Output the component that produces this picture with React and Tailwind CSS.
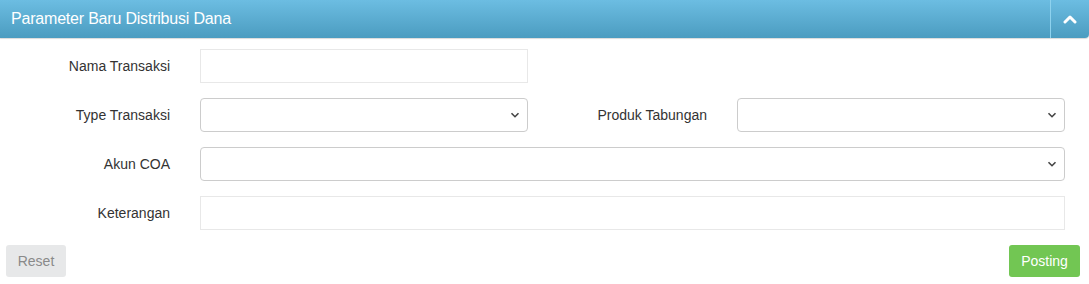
import { useState } from 'react';

function Chevron() {
  return (
    <svg className="pointer-events-none absolute right-[8px] top-1/2 -translate-y-1/2" width="10" height="10" viewBox="0 0 10 10">
      <path d="M1.5 3.2 L5 6.7 L8.5 3.2" fill="none" stroke="#444" strokeWidth="1.6" />
    </svg>
  );
}

function SelectBox({ className = '' }) {
  return (
    <div className={`relative shrink-0 ${className}`}>
      <select className="h-[34px] w-full appearance-none rounded-[4px] border border-[#cccccc] bg-white px-3 text-sm text-[#555] outline-none">
        <option value=""></option>
      </select>
      <Chevron />
    </div>
  );
}

function Label({ children, className = '' }) {
  return <label className={`shrink-0 text-right text-[14px] text-[#333] ${className}`}>{children}</label>;
}

export default function App() {
  const [nama, setNama] = useState('');
  const [ket, setKet] = useState('');

  return (
    <div className="w-[1089px] bg-white" style={{ fontFamily: '"Liberation Sans", Arial, sans-serif' }}>
      <div className="flex h-[38px] items-stretch rounded-br-[4px] bg-gradient-to-b from-[#6cbde2] to-[#4b9cc0] shadow-[0_1px_1px_rgba(0,0,0,0.15)]">
        <h3 className="flex flex-1 items-center pl-[11px] text-[16px] tracking-[-0.2px] text-white">
          Parameter Baru Distribusi Dana
        </h3>
        <button type="button" className="flex w-[39px] items-center justify-center border-l border-[#8ed2ee]">
          <svg width="14" height="10" viewBox="0 0 14 10">
            <path d="M2 8 L7 3 L12 8" fill="none" stroke="#fff" strokeWidth="3" strokeLinecap="round" strokeLinejoin="round" />
          </svg>
        </button>
      </div>

      <div className="flex flex-col gap-[15px] pt-[11px]">
        <div className="flex items-center gap-[30px]">
          <Label className="w-[170px]">Nama Transaksi</Label>
          <input
            value={nama}
            onChange={(e) => setNama(e.target.value)}
            className="h-[34px] w-[328px] shrink-0 border border-[#e8e8e8] px-3 text-sm outline-none"
          />
        </div>

        <div className="flex items-center gap-[30px]">
          <Label className="w-[170px]">Type Transaksi</Label>
          <SelectBox className="w-[328px]" />
          <Label className="w-[149px]">Produk Tabungan</Label>
          <SelectBox className="w-[328px]" />
        </div>

        <div className="flex items-center gap-[30px]">
          <Label className="w-[170px]">Akun COA</Label>
          <SelectBox className="w-[865px]" />
        </div>

        <div className="flex items-center gap-[30px]">
          <Label className="w-[170px]">Keterangan</Label>
          <input
            value={ket}
            onChange={(e) => setKet(e.target.value)}
            className="h-[34px] w-[865px] shrink-0 border border-[#e8e8e8] px-3 text-sm outline-none"
          />
        </div>
      </div>

      <div className="flex items-center justify-between pl-[6px] pr-[9px] pt-[15px]">
        <button type="button" className="h-[32px] w-[60px] rounded-[3px] bg-[#e7e8e9] text-[14px] text-[#8a8a8a]">
          Reset
        </button>
        <button type="button" className="h-[32px] w-[71px] rounded-[3px] bg-[#72c653] text-[14px] text-white">
          Posting
        </button>
      </div>
    </div>
  );
}
